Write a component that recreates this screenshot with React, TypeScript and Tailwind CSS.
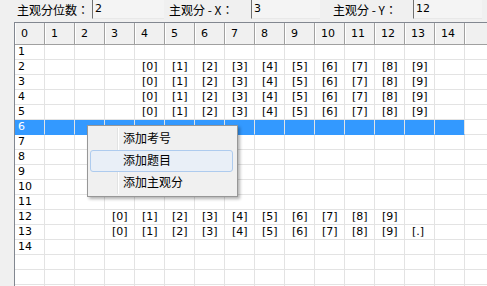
import React from 'react';

const COLS = Array.from({ length: 15 }, (_, i) => i);
const ROWS = Array.from({ length: 17 }, (_, i) => i + 1);
const SELECTED = 6;

// which cell holds which marker
function cellText(row: number, col: number): string {
  if (col === 0) return row <= 14 ? String(row) : '';
  if (row >= 2 && row <= 5 && col >= 4 && col <= 13) return `[${col - 4}]`;
  if ((row === 12 || row === 13) && col >= 3 && col <= 12) return `[${col - 3}]`;
  if (row === 13 && col === 13) return '[.]';
  return '';
}

const menuItems = ['添加考号', '添加题目', '添加主观分'];

const Field: React.FC<{ label: string; value: string; labelW: string; boxW: string }> = ({ label, value, labelW, boxW }) => (
  <div className="flex h-full items-stretch">
    <div
      className={`${labelW} flex items-center pt-[1px] text-[12px] whitespace-pre text-black`}
      style={{ fontFamily: '"Noto Sans CJK JP", sans-serif' }}
    >
      {label}
    </div>
    <div className={`${boxW} -mt-[2px] flex items-center border-l border-[#707070] border-b border-b-[#e8e8e8] bg-[#f4f4f4] pl-[2px] pt-[2px] text-[11px] text-black`}>
      {value}
    </div>
  </div>
);

const App: React.FC = () => {
  return (
    <div
      className="relative h-[286px] w-[487px] overflow-hidden bg-[#f0f0f0] select-none"
      style={{ fontFamily: '"DejaVu Sans", "Noto Sans CJK SC", sans-serif' }}
    >
      {/* top fields */}
      <div className="flex h-[19px] pl-[17px]">
        <Field label="主观分位数：" value="2" labelW="w-[75px]" boxW="w-[72px]" />
        <div className="w-[5px]" />
        <Field label="主观分 - X：" value="3" labelW="w-[82px]" boxW="w-[69px]" />
        <div className="w-[13px]" />
        <Field label="主观分 - Y：" value="12" labelW="w-[80px]" boxW="w-[69px]" />
      </div>

      {/* grid */}
      <div className="ml-[14px] mt-[3px] border-l border-t border-[#828790] bg-white">
        <div className="flex h-[22px] border-b border-[#a0a0a0] bg-[#f0f0f0]">
          {COLS.map((c) => (
            <div
              key={c}
              className="flex w-[30px] shrink-0 items-center border-l border-l-white border-r border-r-[#a0a0a0] pl-[5px] pt-[1px] text-[11px] text-black"
            >
              {c}
            </div>
          ))}
          <div className="flex-1 border-l border-l-white" />
        </div>

        {ROWS.map((r) => {
          const sel = r === SELECTED;
          return (
            <div key={r} className="flex h-[15px]">
              {COLS.map((c) => {
                const t = cellText(r, c);
                return (
                  <div
                    key={c}
                    className={`w-[30px] shrink-0 border-r border-b border-[#e3e3e3] text-[11px] leading-[14px] whitespace-nowrap ${
                      c === 0 ? 'pl-[3px]' : 'pl-[7px]'
                    } ${sel ? 'bg-[#3399ff] text-white border-b-[#3399ff]' : 'text-black'}`}
                  >
                    {t}
                  </div>
                );
              })}
              <div className="flex-1 border-b border-[#e3e3e3]" />
            </div>
          );
        })}
      </div>

      {/* context menu */}
      <div className="absolute left-[87px] top-[125px] w-[151px] border border-[#979797] bg-[#f0f0f0] p-[2px] shadow-[2px_2px_3px_rgba(0,0,0,0.3)]">
        <div className="absolute bottom-[2px] left-[29px] top-[2px] w-[1px] bg-[#e2e3e3]" />
        <div className="absolute bottom-[2px] left-[30px] top-[2px] w-[1px] bg-white" />
        {menuItems.map((m, i) => (
          <div
            key={m}
            className={`relative flex h-[22px] items-center rounded-[3px] border pl-[32px] text-[12px] text-black ${
              i === 1 ? 'mr-[2px] border-[#aecbee] bg-[#e9eff7]' : 'border-transparent'
            }`}
          >
            {m}
          </div>
        ))}
      </div>
    </div>
  );
};

export default App;
